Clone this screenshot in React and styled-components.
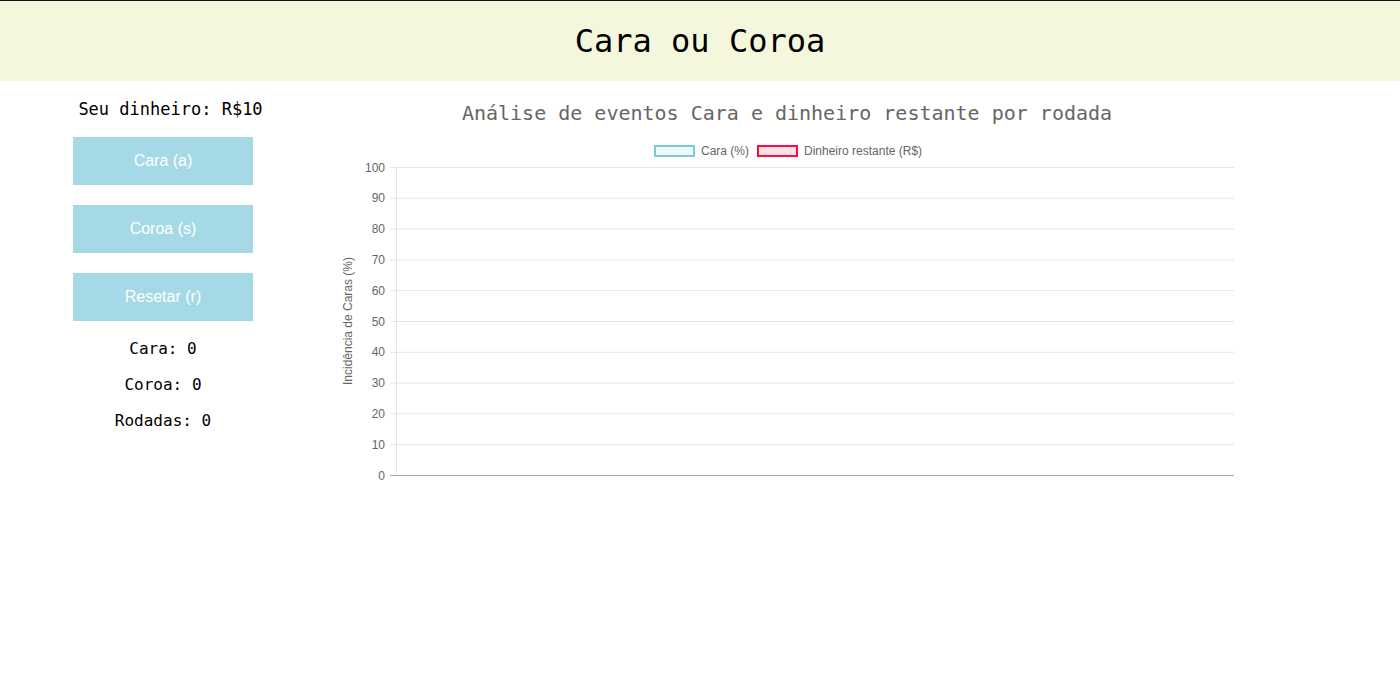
import styled, { createGlobalStyle } from "styled-components"

const GlobalStyle = createGlobalStyle`
    body {
        margin: 0;
        background: #fff;
        font-family: "DejaVu Sans Mono", monospace;
    }
`

const Header = styled.header`
    height: 80px;
    border-top: 1px solid #111;
    background-color: #f5f7dc;
    display: flex;
    align-items: center;
    justify-content: center;
`

const Title = styled.h1`
    margin: 0;
    font-size: 32px;
    font-weight: normal;
    color: #000;
`

const Main = styled.main`
    display: flex;
    gap: 14px;
`

const Sidebar = styled.aside`
    width: 326px;
    padding-top: 18px;
    display: flex;
    flex-direction: column;
    align-items: center;
`

const Money = styled.p`
    margin: 0 0 18px 15px;
    font-size: 17px;
    line-height: 20px;
`

const Buttons = styled.div`
    display: flex;
    flex-direction: column;
    gap: 20px;
`

const ActionButton = styled.button`
    width: 180px;
    height: 48px;
    border: none;
    background-color: #a6d9e6;
    color: #fff;
    font-family: "Liberation Sans", Arial, sans-serif;
    font-size: 16px;
    cursor: pointer;
`

const Stats = styled.div`
    margin-top: 18px;
    display: flex;
    flex-direction: column;
    align-items: center;
    gap: 16px;
`

const Stat = styled.span`
    font-size: 16px;
    line-height: 20px;
`

const ChartSection = styled.section`
    width: 894px;
    padding-top: 20px;
    display: flex;
    flex-direction: column;
    align-items: center;
`

const ChartTitle = styled.h2`
    margin: 0 0 14px;
    font-size: 20px;
    line-height: 24px;
    font-weight: normal;
    color: #666;
`

const chartFont = { fontFamily: "'Liberation Sans', Arial, sans-serif", fontSize: 12, fill: "#666" }

function Chart() {
    const top = 28
    const bottom = 336
    const left = 56
    const right = 894
    const ticks = [100, 90, 80, 70, 60, 50, 40, 30, 20, 10, 0]
    const step = (bottom - top) / 10

    return (
        <svg width="894" height="345">
            <rect x="315" y="7" width="39" height="10" fill="rgba(120,200,220,0.12)" stroke="#7ccadd" strokeWidth="2" />
            <text x="361" y="16" {...chartFont}>Cara (%)</text>
            <rect x="418" y="7" width="39" height="10" fill="rgba(255,0,60,0.12)" stroke="#ff0a3c" strokeWidth="2" />
            <text x="464" y="16" {...chartFont}>Dinheiro restante (R$)</text>

            {ticks.map((t, i) => {
                const y = top + i * step + 0.5
                const isZero = t === 0
                return (
                    <g key={t}>
                        <line x1="50" x2={right} y1={y} y2={y} stroke={isZero ? "#aaa" : "#e5e5e5"} strokeWidth="1" />
                        <text x="45" y={y + 4} textAnchor="end" {...chartFont}>{t}</text>
                    </g>
                )
            })}
            <line x1={left + 0.5} x2={left + 0.5} y1={top} y2={bottom} stroke="#e5e5e5" strokeWidth="1" />

            <text
                transform={`translate(12, ${(top + bottom) / 2}) rotate(-90)`}
                textAnchor="middle"
                {...chartFont}
            >
                Incidência de Caras (%)
            </text>
        </svg>
    )
}

function App() {
    return (
        <>
            <GlobalStyle />
            <Header>
                <Title>Cara ou Coroa</Title>
            </Header>
            <Main>
                <Sidebar>
                    <Money>Seu dinheiro: R$10</Money>
                    <Buttons>
                        <ActionButton>Cara (a)</ActionButton>
                        <ActionButton>Coroa (s)</ActionButton>
                        <ActionButton>Resetar (r)</ActionButton>
                    </Buttons>
                    <Stats>
                        <Stat>Cara: 0</Stat>
                        <Stat>Coroa: 0</Stat>
                        <Stat>Rodadas: 0</Stat>
                    </Stats>
                </Sidebar>
                <ChartSection>
                    <ChartTitle>Análise de eventos Cara e dinheiro restante por rodada</ChartTitle>
                    <Chart />
                </ChartSection>
            </Main>
        </>
    )
}

export default App
